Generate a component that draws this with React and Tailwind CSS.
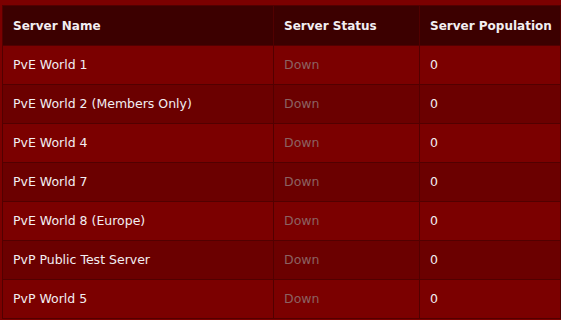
import React from "react";

const servers = [
  { name: "PvE World 1", status: "Down", population: 0 },
  { name: "PvE World 2 (Members Only)", status: "Down", population: 0 },
  { name: "PvE World 4", status: "Down", population: 0 },
  { name: "PvE World 7", status: "Down", population: 0 },
  { name: "PvE World 8 (Europe)", status: "Down", population: 0 },
  { name: "PvP Public Test Server", status: "Down", population: 0 },
  { name: "PvP World 5", status: "Down", population: 0 },
];

export default function App() {
  return (
    <div
      className="w-[561px] h-[320px] overflow-hidden bg-[#7b0000] pt-[5px] pl-[2px]"
      style={{ fontFamily: '"DejaVu Sans", Verdana, sans-serif' }}
    >
      <table className="w-[558px] border-collapse table-fixed text-[12.5px] text-[#f2eef2]">
        <colgroup>
          <col className="w-[271px]" />
          <col className="w-[146px]" />
          <col className="w-[141px]" />
        </colgroup>
        <thead>
          <tr className="bg-[#3c0000] h-[40px] text-[12px]">
            <th className="text-left font-bold whitespace-nowrap pl-[10px] border border-[#520000]">Server Name</th>
            <th className="text-left font-bold whitespace-nowrap pl-[10px] border border-[#520000]">Server Status</th>
            <th className="text-left font-bold whitespace-nowrap pl-[10px] border border-[#520000]">Server Population</th>
          </tr>
        </thead>
        <tbody>
          {servers.map((server, i) => (
            <tr
              key={server.name}
              className={`h-[39px] ${i % 2 === 0 ? "bg-[#7b0000]" : "bg-[#6b0000]"}`}
            >
              <td className="pl-[10px] whitespace-nowrap border border-[#520000]">{server.name}</td>
              <td className="pl-[10px] border border-[#520000] text-[#8c6262]">{server.status}</td>
              <td className="pl-[10px] border border-[#520000]">{server.population}</td>
            </tr>
          ))}
        </tbody>
      </table>
    </div>
  );
}
